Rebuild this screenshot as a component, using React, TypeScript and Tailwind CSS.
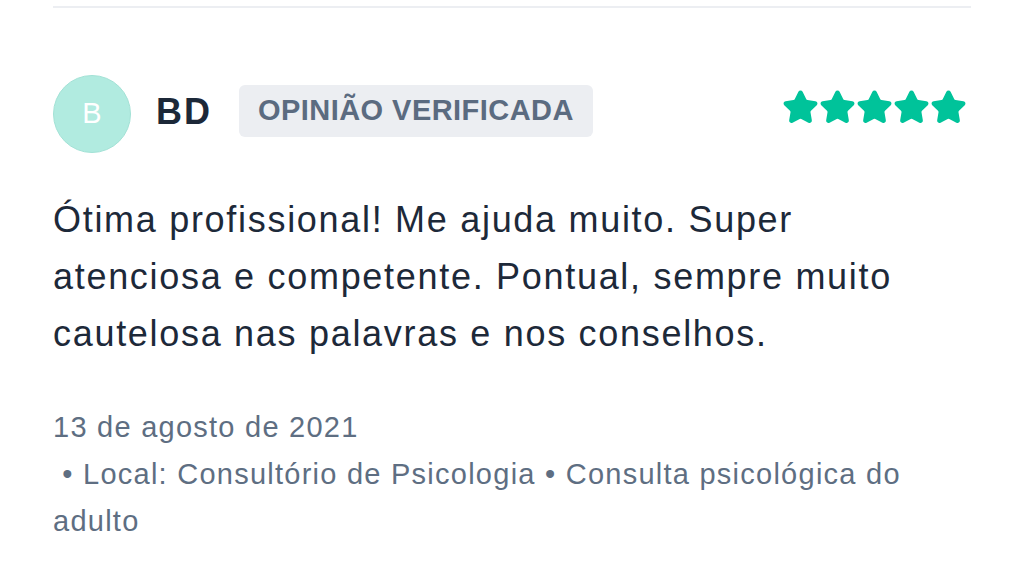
import { Star } from "lucide-react";

export default function App() {
    return (
        <div className="w-[1024px] h-[576px] bg-white overflow-hidden" style={{ fontFamily: '"Liberation Sans", Arial, sans-serif' }}>
            <div className="mx-[53px]">
                <div className="mt-[6px] h-[2px] bg-[#eceef2]" />

                {/* Header */}
                <div className="mt-[67px] flex items-center">
                    <div className="w-[78px] h-[78px] rounded-full bg-[#b1ebe0] border border-[#a3e2d6] flex items-center justify-center text-white text-[29px]">
                        B
                    </div>
                    <div className="ml-[25px] mb-[4px] text-[36px] font-bold text-[#1c2838] tracking-[2px] leading-none">BD</div>
                    <div className="ml-[27px] mb-[6px] h-[52px] px-[19px] rounded-[6px] bg-[#eceef2] flex items-center text-[29px] font-bold text-[#5b6b80] tracking-[0.45px]">
                        OPINIÃO VERIFICADA
                    </div>
                    <div className="ml-auto mr-[4px] mb-[13px] flex">
                        {[0, 1, 2, 3, 4].map((i) => (
                            <Star key={i} className="w-[37px] h-[37px] text-[#00c39a]" fill="currentColor" strokeWidth={2} />
                        ))}
                    </div>
                </div>

                {/* Body */}
                <p className="mt-[38px] text-[36px] leading-[57px] tracking-[1.7px] text-[#1d2939] w-[905px]">
                    Ótima profissional! Me ajuda muito. Super atenciosa e competente. Pontual, sempre muito cautelosa nas palavras e nos conselhos.
                </p>

                {/* Meta */}
                <div className="mt-[42px] text-[29px] leading-[47px] tracking-[1.25px] text-[#5e6e82]">
                    <div>13 de agosto de 2021</div>
                    <div>
                        &nbsp;• Local: Consultório de Psicologia • Consulta psicológica do adulto
                    </div>
                </div>
            </div>
        </div>
    );
}
